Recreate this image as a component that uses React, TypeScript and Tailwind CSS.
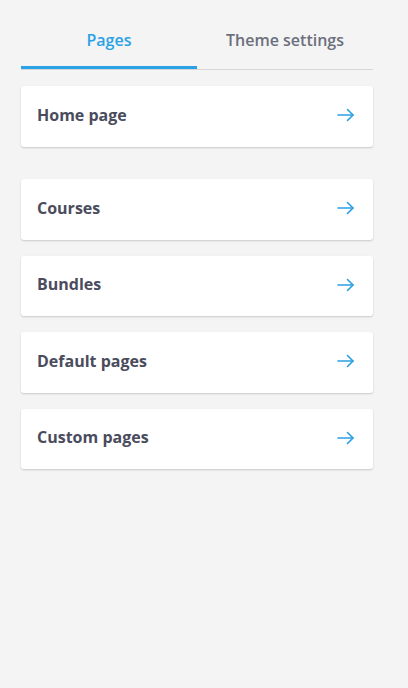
import React from "react";

const items = ["Home page", "Courses", "Bundles", "Default pages", "Custom pages"];

function Arrow() {
  return (
    <svg width="20" height="16" viewBox="0 0 20 16" fill="none" stroke="#2a9fe3" strokeWidth="1.6" strokeLinecap="round" strokeLinejoin="round">
      <path d="M2 8h15" />
      <path d="M11.5 2.5L17 8l-5.5 5.5" />
    </svg>
  );
}

function Card({ label }: { label: string }) {
  return (
    <div className="flex h-[60.5px] items-center justify-between rounded-[3px] bg-white pb-[3px] pl-4 pr-[17px] shadow-[0_1px_2px_rgba(0,0,0,0.18)]">
      <span className="text-[16px] font-bold text-[#4a4c5d]">{label}</span>
      <span className="pt-[1px]">
        <Arrow />
      </span>
    </div>
  );
}

export default function App() {
  return (
    <div className="min-h-[688px] w-[408px] bg-[#f4f4f4] pl-[21px] pr-[35px] pt-[16px]" style={{ fontFamily: '"Open Sans", sans-serif' }}>
      <div className="flex border-b border-[#d6d6d6]">
        <div className="flex h-[53px] w-[176px] flex-col">
          <div className="flex flex-1 items-center justify-center pb-[2px] text-[16px] font-semibold text-[#2aa2e6]">Pages</div>
          <div className="h-[3px] bg-[#2aa2e6]" />
        </div>
        <div className="flex h-[53px] flex-1 items-center justify-center pb-[5px] text-[16px] font-semibold text-[#6c6f7c]">
          Theme settings
        </div>
      </div>
      <div className="mt-[16px]">
        <Card label={items[0]} />
      </div>
      <div className="mt-[32.5px] flex flex-col gap-[16px]">
        {items.slice(1).map((l) => (
          <Card key={l} label={l} />
        ))}
      </div>
    </div>
  );
}
